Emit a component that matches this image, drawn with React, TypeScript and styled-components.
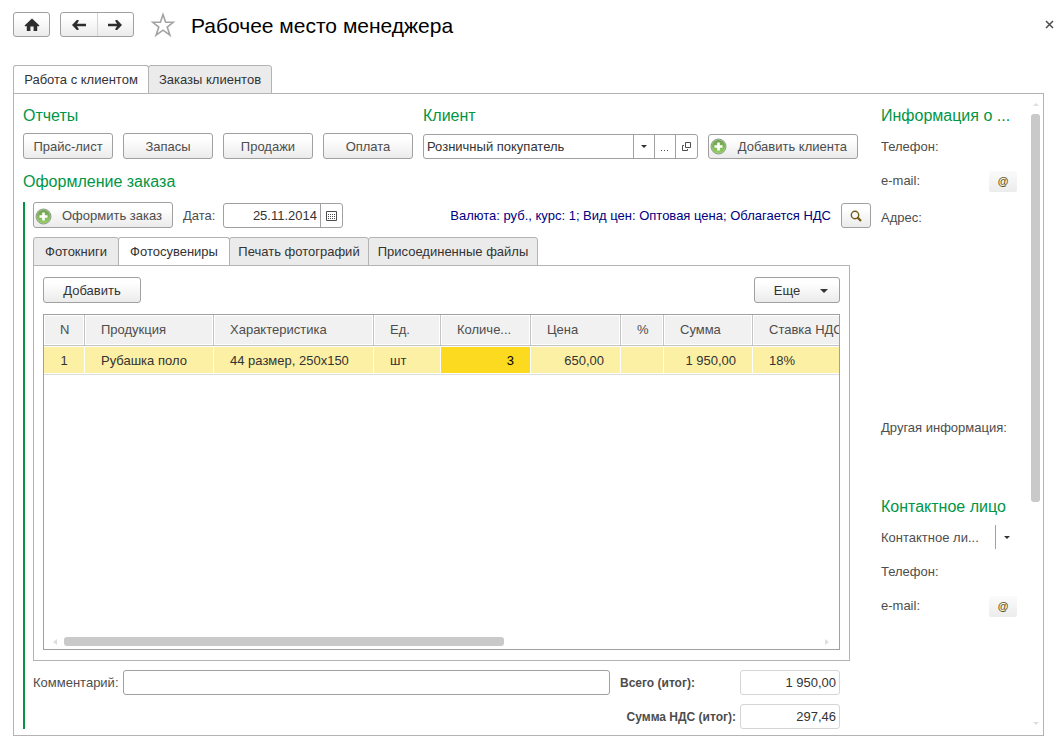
import React, { useState } from "react";
import styled, { createGlobalStyle, css } from "styled-components";

const green = "#009646";
const frame = "#b3b3b3";
const edge = "#a0a0a0";

const GlobalStyle = createGlobalStyle`
  *, *::before, *::after { box-sizing: border-box; }
  body { margin: 0; background: #fff; }
  body, button, input {
    font-family: "Liberation Sans", Arial, sans-serif;
    font-size: 13px;
    line-height: 16px;
    color: #4d4d4d;
  }
  button { margin: 0; cursor: pointer; }
`;

const Page = styled.div`
  min-height: 100vh;
  display: flex;
  flex-direction: column;
  padding: 12px 16px 7px 13px;
`;

const Header = styled.header`
  display: flex;
  align-items: center;
  height: 25px;
  margin: 0 -10px 28px 0;
`;

const raised = css`
  border: 1px solid ${edge};
  border-radius: 3px;
  background: linear-gradient(#fff 20%, #ebebeb);
`;

const NavGroup = styled.div<{ $width: number }>`
  ${raised}
  display: flex;
  width: ${(p) => p.$width}px;
  height: 25px;
  margin-right: 10px;
`;

const NavButton = styled.button`
  flex: 1;
  padding: 0;
  border: 0;
  background: none;
  display: flex;
  align-items: center;
  justify-content: center;
  & + & { border-left: 1px solid #d5d5d5; }
`;

const PlainButton = styled.button`
  padding: 0;
  border: 0;
  background: none;
  display: flex;
`;

const StarButton = styled(PlainButton)`
  margin: 0 15px 0 6px;
`;

const Title = styled.h1`
  flex: 1;
  margin: 0;
  font-size: 21px;
  line-height: 28px;
  padding-top: 2px;
  font-weight: 400;
  color: #000;
`;

const Tabs = styled.div`
  display: flex;
  margin-bottom: -1px;
`;

const Tab = styled.button<{ $active: boolean; $width: number }>`
  width: ${(p) => p.$width}px;
  height: 29px;
  padding: 0;
  margin-right: -1px;
  border: 1px solid ${frame};
  border-bottom-color: ${(p) => (p.$active ? "#fff" : frame)};
  border-radius: 3px 3px 0 0;
  background: ${(p) => (p.$active ? "#fff" : "#ebebeb")};
  color: #333;
  white-space: nowrap;
`;

const Workspace = styled.div`
  flex: 1;
  display: grid;
  grid-template-columns: minmax(0, 1fr) 136px 24px;
  border: 1px solid ${frame};
  padding: 0 2px 0 9px;
`;

const Main = styled.main`
  display: flex;
  flex-direction: column;
  padding: 12px 10px 6px 0;
`;

const Heading = styled.h2`
  margin: 0;
  font-size: 16px;
  line-height: 20px;
  font-weight: 400;
  color: ${green};
  white-space: nowrap;
`;

const TopRow = styled.div`
  display: flex;
  gap: 10px;
  margin-bottom: 13px;
`;

const Group = styled.section<{ $grow?: boolean }>`
  ${(p) => p.$grow && "flex: 1; margin-right: 13px;"}
`;

const Controls = styled.div`
  display: flex;
  align-items: flex-end;
  gap: 10px;
  height: 26px;
  margin-top: 7px;
`;

const Button = styled.button<{ $width: number; $dark?: boolean; $low?: boolean }>`
  ${raised}
  flex: none;
  width: ${(p) => p.$width}px;
  height: ${(p) => (p.$low ? 25 : 26)}px;
  padding: ${(p) => (p.$low ? 0 : 2)}px 0 0;
  display: flex;
  align-items: center;
  justify-content: center;
  color: ${(p) => (p.$dark ? "#333" : "#4d4d4d")};
  white-space: nowrap;
`;

const AddLabel = styled.span`
  flex: 1;
  text-align: right;
  padding-right: 10px;
`;

const IconSlot = styled.span`
  display: flex;
  padding-left: 1px;
`;

const Field = styled.div<{ $width?: number; $pale?: boolean }>`
  ${(p) => (p.$width ? `width: ${p.$width}px;` : "flex: 1; min-width: 0;")}
  height: 25px;
  display: flex;
  border: 1px solid ${(p) => (p.$pale ? "#d5d5d5" : edge)};
  border-radius: 3px;
  background: #fff;
`;

const Input = styled.input<{ $right?: boolean }>`
  flex: 1;
  min-width: 0;
  width: 100%;
  padding: 0 3px;
  border: 0;
  outline: 0;
  background: none;
  color: #333;
  text-align: ${(p) => (p.$right ? "right" : "left")};
`;

const FieldButton = styled.button`
  flex: none;
  width: 21px;
  padding: 0;
  border: 0;
  border-left: 1px solid ${edge};
  background: none;
  display: flex;
  align-items: center;
  justify-content: center;
  &:last-child { width: 22px; }
`;

const Order = styled.section`
  flex: 1;
  display: flex;
  flex-direction: column;
  gap: 9px;
  margin-top: 10px;
  padding-left: 8px;
  border-left: 2px solid ${green};
`;

const OrderBar = styled.div`
  display: flex;
  align-items: flex-end;
  gap: 10px;
  height: 26px;
`;

const DateLabel = styled.label`
  width: 30px;
  line-height: 25px;
  white-space: nowrap;
`;

const Terms = styled.a`
  flex: 1;
  text-align: right;
  line-height: 25px;
  color: #000080;
  text-decoration: none;
  white-space: nowrap;
`;

const Goods = styled.div`
  flex: 1;
  display: flex;
  flex-direction: column;
  margin-right: 21px;
`;

const GoodsPanel = styled.div`
  flex: 1;
  display: flex;
  flex-direction: column;
  gap: 11px;
  padding: 11px 9px 10px;
  border: 1px solid ${frame};
`;

const Toolbar = styled.div`
  display: flex;
  justify-content: space-between;
`;

const MoreLabel = styled.span`
  padding: 0 20px 0 8px;
`;

const TableBox = styled.div`
  flex: 1;
  min-height: 160px;
  display: flex;
  flex-direction: column;
  justify-content: space-between;
  overflow: hidden;
  border: 1px solid ${edge};
`;

const Table = styled.table`
  width: 100%;
  min-width: 809px;
  table-layout: fixed;
  border-collapse: separate;
  border-spacing: 0;
`;

const Col = styled.col<{ $width?: number }>`
  ${(p) => p.$width && `width: ${p.$width}px;`}
`;

type Align = "left" | "center" | "right";

const Th = styled.th<{ $align: Align }>`
  height: 31px;
  padding: 0 16px;
  text-align: ${(p) => p.$align};
  font-weight: 400;
  white-space: nowrap;
  background: #f1f1f1;
  border-right: 1px solid #c4c4c4;
  border-bottom: 1px solid #c4c4c4;
  box-shadow: inset 0 0 0 1px #fff;
`;

const Td = styled.td<{ $align: Align; $current?: boolean }>`
  height: 29px;
  padding: 2px 16px 0;
  text-align: ${(p) => p.$align};
  white-space: nowrap;
  color: ${(p) => (p.$current ? "#000" : "#333")};
  background: ${(p) => (p.$current ? "#fcda1f" : "#fcf0a4")} padding-box;
  border-right: 1px solid #fff;
  border-bottom: 1px solid #ddd;
  box-shadow: inset 0 1px #fff, inset 0 -1px #fff;
`;

const HScroll = styled.div`
  display: flex;
  align-items: center;
  justify-content: space-between;
  height: 9px;
  margin: 0 10px 3px 9px;
`;

const HTrack = styled.div`
  flex: 1;
  display: flex;
  margin: 0 7px;
  &::before { content: ""; flex: 7; height: 9px; border-radius: 3px; background: #c9c9c9; }
  &::after { content: ""; flex: 5; }
`;

const VScroll = styled.div`
  display: flex;
  flex-direction: column;
  align-items: center;
  justify-self: end;
  width: 9px;
  margin: 9px 1px 10px 0;
`;

const VTrack = styled.div`
  flex: 1;
  display: flex;
  flex-direction: column;
  margin: 8px 0 2px;
  &::before { content: ""; flex: 16; width: 9px; border-radius: 3px; background: #c9c9c9; }
  &::after { content: ""; flex: 9; }
`;

const Footer = styled.div`
  display: grid;
  grid-template-columns: 90px minmax(0, 1fr) 130px 100px;
  row-gap: 9px;
  align-items: center;
  margin-right: 31px;
`;

const TotalLabel = styled.label<{ $end?: boolean }>`
  padding: 0 4px 0 10px;
  font-size: 12px;
  font-weight: 700;
  white-space: nowrap;
  ${(p) => p.$end && "grid-column: 3; text-align: right;"}
`;

const Aside = styled.aside`
  display: flex;
  flex-direction: column;
  gap: 10px;
  padding-top: 12px;
`;

const AsideGroup = styled.div`
  display: flex;
  flex-direction: column;
  gap: 8px;
`;

const InfoRow = styled.div<{ $tall?: boolean; $last?: boolean }>`
  display: flex;
  justify-content: space-between;
  height: ${(p) => (p.$tall ? 203 : 24)}px;
  padding-top: ${(p) => (p.$tall ? 3 : 0)}px;
  margin-bottom: ${(p) => (p.$last ? 48 : 0)}px;
  line-height: 26px;
  white-space: nowrap;
`;

const MailButton = styled.button`
  align-self: flex-end;
  width: 28px;
  height: 21px;
  padding: 0 0 2px;
  border: 0;
  border-radius: 2px;
  background: linear-gradient(#fbfbfb, #ececec);
  font-size: 11px;
  font-weight: 700;
  color: #6b5310;
`;

const PickButton = styled(FieldButton)`
  width: 22px;
  height: 24px;
`;

const HomeIcon = () => (
  <svg width="16" height="14" viewBox="0 0 16 14" fill="#2d2d2d">
    <path d="M8 0.6 L15.2 7.2 V8.2 H13.2 V13 H9.6 V8.6 H6.4 V13 H2.8 V8.2 H0.8 V7.2 Z" />
  </svg>
);

const ArrowIcon = ({ right }: { right?: boolean }) => (
  <svg width="16" height="12" viewBox="0 0 16 12" fill="#2d2d2d">
    <path
      d={
        right
          ? "M15 6 L10.2 1 H8.4 V2.2 L10 4.7 H1 V7.3 H10 L8.4 9.8 V11 H10.2 Z"
          : "M1 6 L5.8 1 H7.6 V2.2 L6 4.7 H15 V7.3 H6 L7.6 9.8 V11 H5.8 Z"
      }
    />
  </svg>
);

const StarIcon = () => (
  <svg width="26" height="26" viewBox="0 0 26 26" fill="#fff" stroke="#a3a3a3" strokeWidth="1.6">
    <path d="M13 2.6 L15.6 10.3 H23.2 L17.2 15.1 L19.9 23.2 L13 18.2 L6.1 23.2 L8.8 15.1 L2.8 10.3 H10.4 Z" />
  </svg>
);

const CloseIcon = () => (
  <svg width="9" height="9" viewBox="0 0 9 9" stroke="#4d4d4d" strokeWidth="1.5">
    <path d="M1 1 L8 8 M8 1 L1 8" />
  </svg>
);

const PlusIcon = () => (
  <svg width="17" height="17" viewBox="0 0 17 17">
    <defs>
      <linearGradient id="plusFill" x1="0" y1="0" x2="0" y2="1">
        <stop offset="0" stopColor="#6d9f4e" />
        <stop offset="1" stopColor="#92cf62" />
      </linearGradient>
    </defs>
    <circle cx="8.5" cy="8.5" r="7.5" fill="#b5d39f" stroke="#8b9a84" />
    <circle cx="8.5" cy="8.5" r="6.6" fill="url(#plusFill)" />
    <path d="M8.5 4.5 V12.5 M4.5 8.5 H12.5" stroke="#fff" strokeWidth="2.6" />
  </svg>
);

const CaretIcon = ({ size = 6 }: { size?: number }) => (
  <svg width={size} height={size / 2} viewBox="0 0 8 4" fill="#333">
    <path d="M0 0 H8 L4 4 Z" />
  </svg>
);

const OpenIcon = () => (
  <svg width="11" height="11" viewBox="0 0 11 11" fill="none" stroke="#4d4d4d">
    <path d="M4.5 1.5 H9.5 V6.5 H4.5 Z M3 4.5 H1.5 V9.5 H6.5 V8" />
  </svg>
);

const DotsIcon = () => (
  <svg width="8" height="11" viewBox="0 0 8 11" fill="#4d4d4d">
    <path d="M0 9 h1 v1 h-1z M3 9 h1 v1 h-1z M6 9 h1 v1 h-1z" />
  </svg>
);

const CalendarIcon = () => (
  <svg width="11" height="10" viewBox="0 0 11 10" fill="none" stroke="#4d4d4d">
    <path d="M0.5 0.5 H10.5 V9.5 H0.5 Z" />
    <path d="M2 3.5 H9 M2 5.5 H9 M2 7.5 H9" strokeDasharray="1 1" />
  </svg>
);

const SearchIcon = () => (
  <svg width="12" height="12" viewBox="0 0 12 12" fill="none" stroke="#735a14">
    <circle cx="5" cy="5" r="3.7" strokeWidth="1.4" />
    <path d="M7.4 7.4 L11 11" strokeWidth="2.2" />
  </svg>
);

const Tip = ({ d, w, h }: { d: string; w: number; h: number }) => (
  <svg width={w} height={h} viewBox={`0 0 ${w} ${h}`} fill="#dedede">
    <path d={d} />
  </svg>
);

const pageTabs = [
  { name: "Работа с клиентом", width: 136 },
  { name: "Заказы клиентов", width: 124 },
];

const goodsTabs = [
  { name: "Фотокниги", width: 86 },
  { name: "Фотосувениры", width: 112 },
  { name: "Печать фотографий", width: 140 },
  { name: "Присоединенные файлы", width: 170 },
];

const reports = ["Прайс-лист", "Запасы", "Продажи", "Оплата"];

const columns: { title: string; width?: number; head: Align; cell: Align; value: string; current?: boolean }[] = [
  { title: "N", width: 41, head: "center", cell: "center", value: "1" },
  { title: "Продукция", width: 129, head: "left", cell: "left", value: "Рубашка поло" },
  { title: "Характеристика", width: 160, head: "left", cell: "left", value: "44 размер, 250х150" },
  { title: "Ед.", width: 67, head: "left", cell: "left", value: "шт" },
  { title: "Количе...", width: 90, head: "left", cell: "right", value: "3", current: true },
  { title: "Цена", width: 90, head: "left", cell: "right", value: "650,00" },
  { title: "%", width: 43, head: "center", cell: "right", value: "" },
  { title: "Сумма", width: 89, head: "left", cell: "right", value: "1 950,00" },
  { title: "Ставка НДС", head: "left", cell: "left", value: "18%" },
];

type TabItem = { name: string; width: number };

const TabStrip = ({ items, initial }: { items: TabItem[]; initial: number }) => {
  const [active, setActive] = useState(initial);
  return (
    <Tabs role="tablist">
      {items.map((t, i) => (
        <Tab
          key={t.name}
          role="tab"
          aria-selected={i === active}
          $active={i === active}
          $width={t.width}
          onClick={() => setActive(i)}
        >
          {t.name}
        </Tab>
      ))}
    </Tabs>
  );
};

export default function App() {
  return (
    <Page>
      <GlobalStyle />
      <Header>
        <NavGroup $width={37}>
          <NavButton aria-label="Домой"><HomeIcon /></NavButton>
        </NavGroup>
        <NavGroup $width={74}>
          <NavButton aria-label="Назад"><ArrowIcon /></NavButton>
          <NavButton aria-label="Вперед"><ArrowIcon right /></NavButton>
        </NavGroup>
        <StarButton aria-label="Избранное"><StarIcon /></StarButton>
        <Title>Рабочее место менеджера</Title>
        <PlainButton aria-label="Закрыть"><CloseIcon /></PlainButton>
      </Header>

      <TabStrip items={pageTabs} initial={0} />
      <Workspace>
        <Main>
          <TopRow>
            <Group>
              <Heading>Отчеты</Heading>
              <Controls>
                {reports.map((r) => (
                  <Button key={r} $width={90}>{r}</Button>
                ))}
              </Controls>
            </Group>
            <Group $grow>
              <Heading>Клиент</Heading>
              <Controls>
                <Field>
                  <Input aria-label="Клиент" defaultValue="Розничный покупатель" />
                  <FieldButton aria-label="Выбрать"><CaretIcon /></FieldButton>
                  <FieldButton aria-label="Показать все"><DotsIcon /></FieldButton>
                  <FieldButton aria-label="Открыть"><OpenIcon /></FieldButton>
                </Field>
                <Button $width={150} $low>
                  <IconSlot><PlusIcon /></IconSlot>
                  <AddLabel>Добавить клиента</AddLabel>
                </Button>
              </Controls>
            </Group>
          </TopRow>

          <Heading>Оформление заказа</Heading>
          <Order>
            <OrderBar>
              <Button $width={140}>
                <IconSlot><PlusIcon /></IconSlot>
                <AddLabel>Оформить заказ</AddLabel>
              </Button>
              <DateLabel htmlFor="date">Дата:</DateLabel>
              <Field $width={120}>
                <Input id="date" $right defaultValue="25.11.2014" />
                <FieldButton aria-label="Календарь"><CalendarIcon /></FieldButton>
              </Field>
              <Terms href="#terms">
                Валюта: руб., курс: 1; Вид цен: Оптовая цена; Облагается НДС
              </Terms>
              <Button $width={30} $low aria-label="Найти"><SearchIcon /></Button>
            </OrderBar>

            <Goods>
              <TabStrip items={goodsTabs} initial={1} />
              <GoodsPanel>
                <Toolbar>
                  <Button $width={98} $dark>Добавить</Button>
                  <Button $width={86} $dark>
                    <MoreLabel>Еще</MoreLabel>
                    <CaretIcon size={8} />
                  </Button>
                </Toolbar>
                <TableBox>
                  <Table>
                    <colgroup>
                      {columns.map((c) => <Col key={c.title} $width={c.width} />)}
                    </colgroup>
                    <thead>
                      <tr>
                        {columns.map((c) => <Th key={c.title} $align={c.head}>{c.title}</Th>)}
                      </tr>
                    </thead>
                    <tbody>
                      <tr>
                        {columns.map((c) => (
                          <Td key={c.title} $align={c.cell} $current={c.current}>{c.value}</Td>
                        ))}
                      </tr>
                    </tbody>
                  </Table>
                  <HScroll aria-hidden="true">
                    <Tip d="M4 0 V6 L0 3 Z" w={4} h={6} />
                    <HTrack />
                    <Tip d="M0 0 V6 L4 3 Z" w={4} h={6} />
                  </HScroll>
                </TableBox>
              </GoodsPanel>
            </Goods>

            <Footer>
              <label htmlFor="comment">Комментарий:</label>
              <Field><Input id="comment" /></Field>
              <TotalLabel htmlFor="total">Всего (итог):</TotalLabel>
              <Field $pale $width={100}><Input id="total" $right readOnly value="1 950,00" /></Field>
              <TotalLabel htmlFor="vat" $end>Сумма НДС (итог):</TotalLabel>
              <Field $pale $width={100}><Input id="vat" $right readOnly value="297,46" /></Field>
            </Footer>
          </Order>
        </Main>

        <Aside>
          <AsideGroup>
            <Heading>Информация о ...</Heading>
            <InfoRow>Телефон:</InfoRow>
          </AsideGroup>
          <InfoRow>
            e-mail:
            <MailButton aria-label="Написать клиенту">@</MailButton>
          </InfoRow>
          <InfoRow $tall>Адрес:</InfoRow>
          <InfoRow $last>Другая информация:</InfoRow>
          <AsideGroup>
            <Heading>Контактное лицо</Heading>
            <InfoRow>
              Контактное ли...
              <PickButton aria-label="Выбрать контактное лицо"><CaretIcon /></PickButton>
            </InfoRow>
          </AsideGroup>
          <InfoRow>Телефон:</InfoRow>
          <InfoRow>
            e-mail:
            <MailButton aria-label="Написать контактному лицу">@</MailButton>
          </InfoRow>
        </Aside>

        <VScroll aria-hidden="true">
          <Tip d="M0 3 H6 L3 0 Z" w={6} h={3} />
          <VTrack />
          <Tip d="M0 0 H6 L3 3 Z" w={6} h={3} />
        </VScroll>
      </Workspace>
    </Page>
  );
}
